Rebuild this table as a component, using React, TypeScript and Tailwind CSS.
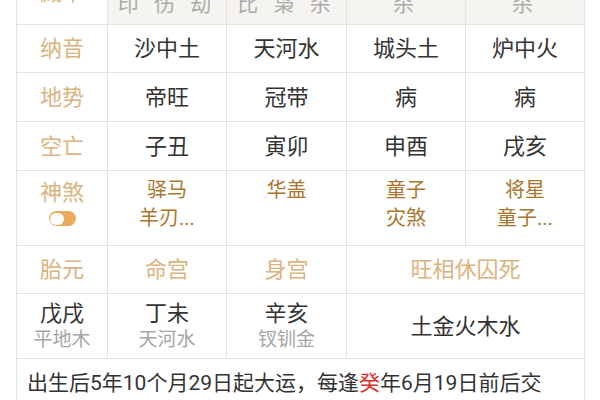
const label = 'text-[22px] text-[#d9b47e]'
const main = 'text-[22px] text-[#333]'
const sha = 'text-[20px] leading-[28px] text-[#a8772e]'
const sub = 'text-[19px] leading-[24px] text-[#a5a5a5]'
const cell = 'border border-[#e3e3e3] text-center align-middle p-0'

const Toggle = () => (
  <span className="mx-auto mt-[3px] flex h-[15px] w-[27px] items-center rounded-full bg-[#e9ac5e] p-[1.5px]">
    <span className="h-[12px] w-[14px] rounded-full bg-white" />
  </span>
)

const App = () => {
  return (
    <div
      className="h-[400px] w-[600px] overflow-hidden bg-white"
      style={{ fontFamily: "Roboto, 'Noto Sans CJK SC', sans-serif" }}
    >
      <table className="-mt-[40px] ml-[16px] w-[568px] table-fixed border-collapse">
        <colgroup>
          <col className="w-[91px]" />
          <col className="w-[119px]" />
          <col className="w-[120px]" />
          <col className="w-[119px]" />
          <col className="w-[119px]" />
        </colgroup>
        <tbody>
          <tr className="h-[64px]">
            <td className={`${cell} ${label}`}>藏干</td>
            {[
              ['丁戊辛', '印 伤 劫'],
              ['癸辛丁', '比 枭 杀'],
              ['壬', '杀'],
              ['壬', '杀'],
            ].map(([a, b], i) => (
              <td key={i} className={`${cell} bg-[#f5f4f1] align-bottom`}>
                <div className="pb-[4px]">
                  <div className="text-[20px] leading-[26px] text-[#555]">{a}</div>
                  <div className="text-[21px] leading-[26px] tracking-[5px] text-[#ababab]">{b}</div>
                </div>
              </td>
            ))}
          </tr>
          <tr className="h-[48px]">
            <td className={`${cell} ${label}`}>纳音</td>
            <td className={`${cell} ${main}`}>沙中土</td>
            <td className={`${cell} ${main}`}>天河水</td>
            <td className={`${cell} ${main}`}>城头土</td>
            <td className={`${cell} ${main}`}>炉中火</td>
          </tr>
          <tr className="h-[49px]">
            <td className={`${cell} ${label}`}>地势</td>
            <td className={`${cell} ${main}`}>帝旺</td>
            <td className={`${cell} ${main}`}>冠带</td>
            <td className={`${cell} ${main}`}>病</td>
            <td className={`${cell} ${main}`}>病</td>
          </tr>
          <tr className="h-[49px]">
            <td className={`${cell} ${label}`}>空亡</td>
            <td className={`${cell} ${main}`}>子丑</td>
            <td className={`${cell} ${main}`}>寅卯</td>
            <td className={`${cell} ${main}`}>申酉</td>
            <td className={`${cell} ${main}`}>戌亥</td>
          </tr>
          <tr className="h-[75px]">
            <td className={`${cell} align-top pt-[7px]`}>
              <div className={`${label} leading-[30px]`}>神煞</div>
              <Toggle />
            </td>
            <td className={`${cell} align-top pt-[5px]`}>
              <div className={sha}>驿马</div>
              <div className={sha}>羊刃...</div>
            </td>
            <td className={`${cell} align-top pt-[5px]`}>
              <div className={sha}>华盖</div>
            </td>
            <td className={`${cell} align-top pt-[5px]`}>
              <div className={sha}>童子</div>
              <div className={sha}>灾煞</div>
            </td>
            <td className={`${cell} align-top pt-[5px]`}>
              <div className={sha}>将星</div>
              <div className={sha}>童子...</div>
            </td>
          </tr>
          <tr className="h-[48px]">
            <td className={`${cell} ${label}`}>胎元</td>
            <td className={`${cell} ${label}`}>命宫</td>
            <td className={`${cell} ${label}`}>身宫</td>
            <td colSpan={2} className={`${cell} ${label}`}>旺相休囚死</td>
          </tr>
          <tr className="h-[65px]">
            {[
              ['戊戌', '平地木'],
              ['丁未', '天河水'],
              ['辛亥', '钗钏金'],
            ].map(([a, b]) => (
              <td key={a} className={cell}>
                <div className={`${main} leading-[28px]`}>{a}</div>
                <div className={sub}>{b}</div>
              </td>
            ))}
            <td colSpan={2} className={`${cell} ${main}`}>土金火木水</td>
          </tr>
          <tr>
            <td colSpan={5} className="border border-[#e3e3e3] px-[10px] pt-[9px] pb-[20px] text-left text-[21px] leading-[30px] text-[#333]">
              出生后5年10个月29日起大运，每逢<span className="text-[#e0302a]">癸</span>年6月19日前后交
            </td>
          </tr>
        </tbody>
      </table>
    </div>
  )
}

export default App
